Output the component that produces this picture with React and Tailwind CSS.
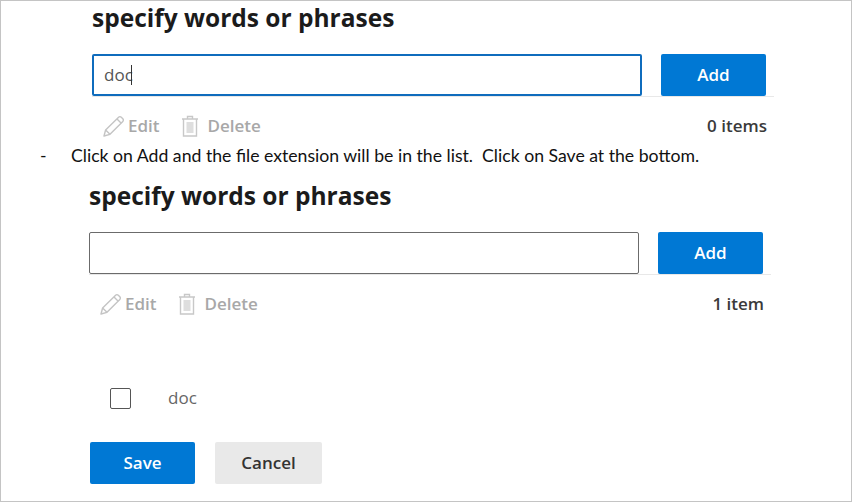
import { useState } from 'react';

const font = "font-['Open_Sans','Noto_Sans',sans-serif]";

function Pencil() {
  return (
    <svg width="23" height="23" viewBox="0 0 23 23" fill="none" stroke="#c4c4c4" strokeWidth="1.4" strokeLinejoin="round">
      <path d="M2 21l1.6-6L16.6 2.2a1.9 1.9 0 0 1 2.7 0l1.5 1.5a1.9 1.9 0 0 1 0 2.7L8 19.3z" />
      <path d="M3.6 15L8 19.3M15 4l4 4" />
    </svg>
  );
}

function Trash() {
  return (
    <svg width="18" height="22" viewBox="0 0 18 22" fill="none" stroke="#c8c8c8" strokeWidth="1.4">
      <path d="M1 4h16M6.5 4V1.5h5V4M2.5 4v17h13V4" />
      <rect x="5.5" y="7" width="7" height="11" fill="#dedede" stroke="none" />
    </svg>
  );
}

function WordsForm({ value, focused, count, className }) {
  return (
    <div className={className}>
      <h2 className="text-[24.5px] leading-[30px] font-bold text-[#1b1b1b]">specify words or phrases</h2>
      <div className="mt-[21px] w-[682px] border-b border-[#e8e8e8] flex justify-between">
        <div
          className={
            focused
              ? 'w-[550px] h-[42px] rounded-[2px] border-2 border-[#0f6cbd] flex items-center px-[10px] text-[17px] text-[#555]'
              : 'w-[550px] h-[42px] rounded-[2px] border-[1.5px] border-[#6b6b6b] flex items-center px-[10px] text-[17px] text-[#555]'
          }
        >
          {value}
          {focused && <span className="w-px h-[20px] bg-[#333] -ml-[2px]" />}
        </div>
        <button className="w-[105px] h-[42px] mr-[8px] rounded-[2px] bg-[#0078d4] text-white text-[17px] font-semibold">Add</button>
      </div>
      <div className="mt-[17px] w-[675px] flex items-center justify-between h-[24px]">
        <div className="flex items-center text-[17px] font-semibold text-[#a8a8a8]">
          <div className="ml-[10px] flex items-center gap-[3px]"><Pencil /> Edit</div>
          <div className="ml-[21px] flex items-center gap-[9px]"><Trash /> Delete</div>
        </div>
        <span className="text-[17px] font-semibold text-[#3a3a3a]">{count}</span>
      </div>
    </div>
  );
}

export default function App() {
  const [checked, setChecked] = useState(false);

  return (
    <div className={`w-[852px] h-[502px] overflow-hidden bg-white border border-[#c4c4c4] ${font}`}>
      <WordsForm value="doc" focused count="0 items" className="pl-[91px] pt-[2px]" />

      <div className="mt-[6px] pl-[39px] flex items-center h-[24px] font-['Lato','Noto_Sans',sans-serif] text-[17.65px] text-[#111]">
        <span className="w-[31px]">-</span>
        <span className="whitespace-pre">Click on Add and the file extension will be in the list.  Click on Save at the bottom.</span>
      </div>

      <WordsForm value="" count="1 item" className="pl-[88px] pt-[13px]" />

      <div className="mt-[70px] pl-[109px] flex items-center h-[24px]">
        <button
          onClick={() => setChecked(!checked)}
          className="w-[21px] h-[21px] rounded-[2px] border-[1.5px] border-[#555] bg-white"
          aria-checked={checked}
          role="checkbox"
        />
        <span className="ml-[37px] text-[17px] text-[#666]">doc</span>
      </div>

      <div className="mt-[32px] pl-[89px] flex gap-[20px]">
        <button className="w-[105px] h-[42px] rounded-[2px] bg-[#0078d4] text-white text-[17px] font-semibold">Save</button>
        <button className="w-[107px] h-[42px] rounded-[2px] bg-[#e9e9e9] text-[#333] text-[17px] font-semibold">Cancel</button>
      </div>
    </div>
  );
}
